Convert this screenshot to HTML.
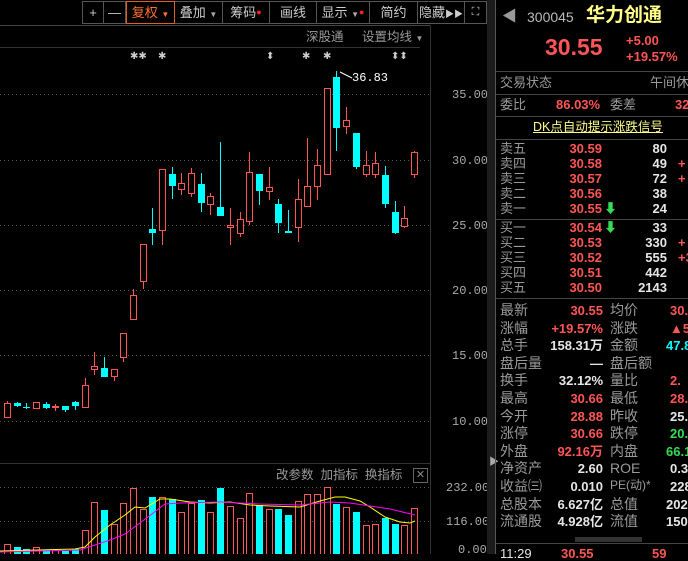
<!DOCTYPE html>
<html><head><meta charset="utf-8"><style>
*{margin:0;padding:0;box-sizing:border-box}
body{width:688px;height:554px;background:#000;overflow:hidden;position:relative;font-family:"Liberation Sans","Noto Sans CJK SC",sans-serif;color:#ccc}
.a{position:absolute;white-space:nowrap;line-height:1}
.tb{position:absolute;top:1px;height:23px;border:1px solid #555;border-left:none;color:#ccc;font-size:13px;text-align:center;line-height:21px}
.lb{color:#9a9a9a;font-size:13px}
.r{color:#ff5555}.w{color:#e6e6e6}.g{color:#33dd55}.c{color:#00ffff}
.num{font-weight:bold;font-size:13px}
.hl{position:absolute;left:496px;width:192px;height:1px;background:#444}
</style></head><body>
<div class="tb" style="left:82px;width:22px;border-left:1px solid #555">+</div>
<div class="tb" style="left:104px;width:22px">—</div>
<div class="tb" style="left:126px;width:49px;border:1px solid #e06020;color:#ff7030">复权 <span style="font-size:8px">▼</span></div>
<div class="tb" style="left:175px;width:48px">叠加 <span style="font-size:8px;color:#aaa">▼</span></div>
<div class="tb" style="left:223px;width:47px">筹码<span style="color:#f22;font-size:9px;vertical-align:top">●</span></div>
<div class="tb" style="left:270px;width:47px">画线</div>
<div class="tb" style="left:317px;width:53px">显示 <span style="font-size:8px;color:#aaa">▼</span><span style="color:#f22;font-size:9px;vertical-align:top">●</span></div>
<div class="tb" style="left:370px;width:48px">简约</div>
<div class="tb" style="left:418px;width:47px">隐藏<span style="font-size:9px">▶▶</span></div>
<div class="tb" style="left:465px;width:22px;font-size:11px">⛶</div>
<div class="a" style="left:0;top:25px;width:430px;height:1px;background:#444"></div>
<div class="a" style="left:306px;top:31px;font-size:12.5px;color:#999">深股通</div>
<div class="a" style="left:362px;top:31px;font-size:12.5px;color:#999">设置均线 <span style="font-size:8px">▼</span></div>
<div class="a" style="left:0;top:47px;width:420px;height:1px;background:#333"></div>
<div class="a" style="left:430px;top:25px;width:1px;height:529px;background:#333"></div>
<div class="a" style="left:0;top:463px;width:430px;height:1px;background:#333"></div>
<div class="a" style="left:276px;top:469px;font-size:12.5px;color:#999">改参数 &nbsp;加指标 &nbsp;换指标</div>
<div class="a" style="left:413px;top:468px;width:15px;height:15px;border:1px solid #666;color:#888;font-size:11px;text-align:center;line-height:13px">✕</div>
<div class="a" style="left:487px;top:0;width:8px;height:554px;background:#1c1c1c"></div>
<div class="a" style="left:489px;top:458px;color:#aaa;font-size:10px">▶</div>
<div class="a" style="left:495px;top:0;width:1px;height:554px;background:#555"></div>
<svg class="a" style="left:0;top:0" width="487" height="554" id="s">
<g font-family="Liberation Mono,monospace" font-size="12" fill="#aaa">
<text x="452" y="98">35.00</text><text x="452" y="164">30.00</text><text x="452" y="229">25.00</text><text x="452" y="294">20.00</text><text x="452" y="359">15.00</text><text x="452" y="425">10.00</text>
<text x="446" y="491">232.00</text><text x="446" y="525">116.00</text><text x="458" y="553">0.00</text>
<text x="352" y="81" fill="#fff">36.83</text>
</g>
<g fill="#ccc" font-size="10" font-family="DejaVu Sans"><text x="130" y="59">✱✱</text><text x="158" y="59">✱</text><text x="266" y="59">⬍</text><text x="302" y="59">✱</text><text x="323" y="59">✱</text><text x="391" y="59">⬍⬍</text></g>
<path d="M340 72 l6 3 l6 3" stroke="#fff" fill="none"/>
</svg>
<script>
var s=document.getElementById('s'),h='';
[94,160,225,290,355,421,487,521].forEach(function(y){h+='<line x1="0" x2="430" y1="'+y+'.5" y2="'+y+'.5" stroke="#555" stroke-dasharray="1,3"/>';});
var C=[['r',403,417,401,417],['c',403,406,402,407],['c',407,408,403,409],['r',402,408,402,408],['c',404,408,402,409],['r',406,407,404,411],['c',406,410,406,412],['c',402,406,401,410],['r',385,407,378,407],['r',366,369,352,375],['c',368,377,357,377],['r',369,376,369,381],['r',333,357,333,362],['r',295,319,289,319],['r',244,281,244,289],['c',229,233,208,245],['r',169,230,169,245],['c',174,186,167,199],['r',183,189,173,195],['r',173,193,168,197],['c',184,203,173,212],['r',196,204,193,215],['c',207,216,142,216],['r',225,227,208,245],['r',219,233,212,237],['r',172,221,152,225],['c',174,191,174,205],['r',187,191,167,200],['c',204,223,199,233],['c',231,233,210,233],['r',199,227,179,242],['r',186,206,138,207],['r',165,186,149,200],['r',88,174,88,175],['c',77,128,71,151],['r',120,126,107,134],['c',133,167,133,169],['r',165,174,151,177],['r',163,174,152,178],['c',175,204,166,208],['c',212,233,201,234],['r',218,226,206,228],['r',152,174,151,178]];
var V=[544,547,549,547,550,550,551,549,530,502,510,524,503,488,509,497,497,499,512,503,500,512,488,506,518,493,505,509,509,515,501,494,494,487,504,507,512,525,524,518,524,525,508];
C.forEach(function(d,i){var x=Math.round(7+i*9.69),col=d[0]=='r'?'#ff5555':'#00ffff';
h+='<line x1="'+(x+.5)+'" x2="'+(x+.5)+'" y1="'+d[3]+'" y2="'+d[4]+'" stroke="'+col+'"/>';
var bh=Math.max(d[2]-d[1],1);
if(d[0]=='r')h+='<rect x="'+(x-3+.5)+'" y="'+(d[1]+.5)+'" width="6" height="'+bh+'" fill="#000" stroke="'+col+'"/>';
else h+='<rect x="'+(x-3)+'" y="'+d[1]+'" width="7" height="'+bh+'" fill="'+col+'"/>';
var vc=C[i][0]=='r'?'#ff5555':'#00ffff',vy=V[i];
if(vc=='#ff5555')h+='<rect x="'+(x-3+.5)+'" y="'+(vy+.5)+'" width="6" height="'+(555-vy)+'" fill="#000" stroke="'+vc+'"/>';
else h+='<rect x="'+(x-3)+'" y="'+vy+'" width="7" height="'+(555-vy)+'" fill="'+vc+'"/>';});
h+='<polyline fill="none" stroke="#ffff00" points="0,551 75,549 85,547 95,537 110,525 125,515 135,507 145,508 160,499 170,499 190,502 210,503 230,502 250,505 270,506 300,507 320,501 335,497 345,497 360,501 370,507 385,517 400,522 410,523 415,521"/>';
h+='<polyline fill="none" stroke="#ff00ff" points="0,552 80,550 95,545 110,540 125,534 140,523 165,504 180,503 220,502 260,504 300,505 330,502 350,503 370,506 390,509 415,515"/>';
s.insertAdjacentHTML('afterbegin',h);
</script>
<!-- right panel -->
<div class="a" style="left:502px;top:9px;color:#999;font-size:15px">◀</div>
<div class="a" style="left:527px;top:10px;color:#bbb;font-size:14px">300045</div>
<div class="a" style="left:586px;top:6px;color:#ffff88;font-size:19px;font-weight:bold">华力创通</div>
<div class="a r" style="left:545px;top:36px;font-size:23px;font-weight:bold">30.55</div>
<div class="a r num" style="left:626px;top:34px">+5.00</div>
<div class="a r num" style="left:626px;top:50px">+19.57%</div>
<div class="hl" style="top:71px"></div>
<div class="a lb" style="left:500px;top:76px">交易状态</div><div class="a lb" style="left:650px;top:76px">午间休</div>
<div class="hl" style="top:94px"></div>
<div class="a lb" style="left:500px;top:98px">委比</div><div class="a r num" style="left:556px;top:98px">86.03%</div><div class="a lb" style="left:610px;top:98px">委差</div><div class="a r num" style="left:675px;top:98px">32</div>
<div class="hl" style="top:116px"></div>
<div class="a" style="left:533px;top:121px;color:#ffff88;font-size:12.5px;text-decoration:underline">DK点自动提示涨跌信号</div>
<div class="hl" style="top:139px"></div>
<div id="bk"></div>
<div class="hl" style="top:219px"></div>
<div class="hl" style="top:298px"></div>
<div id="st"></div>
<div class="a" style="left:575px;top:537px;width:67px;height:5px;background:#333"></div>
<div class="hl" style="top:543px"></div>
<div class="a w" style="left:500px;top:547px;font-size:13px">11:29</div><div class="a r num" style="left:561px;top:547px">30.55</div><div class="a r num" style="left:652px;top:547px">59</div>
<script>
var b='',L=['卖五','卖四','卖三','卖二','卖一','买一','买二','买三','买四','买五'],P=['30.59','30.58','30.57','30.56','30.55','30.54','30.53','30.52','30.51','30.50'],Q=['80','49','72','38','24','33','330','555','442','2143'],X=['','+','+','','','','+','+3','',''],Y=[142,157,172,187,202,221,236,251,266,281];
for(var i=0;i<10;i++){b+='<div class="a lb" style="left:500px;top:'+Y[i]+'px">'+L[i]+'</div><div class="a r num" style="left:540px;width:62px;text-align:right;top:'+Y[i]+'px">'+P[i]+'</div><div class="a w num" style="left:620px;width:47px;text-align:right;top:'+Y[i]+'px">'+Q[i]+'</div><div class="a r num" style="left:678px;top:'+Y[i]+'px">'+X[i]+'</div>';
if(i==4||i==5)b+='<div class="a g" style="left:604px;top:'+Y[i]+'px;font-size:13px;font-weight:bold">⬇</div>';}
document.getElementById('bk').innerHTML=b;
var R=[['最新','30.55','r','均价','30.','r'],['涨幅','+19.57%','r','涨跌','▲5.','r'],['总手','158.31万','w','金额','47.85','c'],['盘后量','—','w','盘后额','',''],['换手','32.12%','w','量比','2.','r'],['最高','30.66','r','最低','28.','r'],['今开','28.88','r','昨收','25.','w'],['涨停','30.66','r','跌停','20.','g'],['外盘','92.16万','r','内盘','66.16','g'],['净资产','2.60','w','ROE','0.3','w'],['收益㈢','0.010','w','PE(动)*','228.','w'],['总股本','6.627亿','w','总值','202.4','w'],['流通股','4.928亿','w','流值','150.6','w']];
var t='';R.forEach(function(r,i){var y=303+i*17.6;
t+='<div class="a lb" style="left:500px;top:'+y+'px;font-size:14px">'+r[0]+'</div><div class="a num '+r[2]+'" style="left:520px;width:83px;text-align:right;top:'+(y+1)+'px">'+r[1]+'</div><div class="a lb" style="left:610px;top:'+y+'px;font-size:'+(r[3].length>3?12:14)+'px">'+r[3]+'</div><div class="a num '+r[5]+'" style="left:'+(r[4].length>4?666:670)+'px;top:'+(y+1)+'px">'+r[4]+'</div>';});
document.getElementById('st').innerHTML=t;
</script>
</body></html>
